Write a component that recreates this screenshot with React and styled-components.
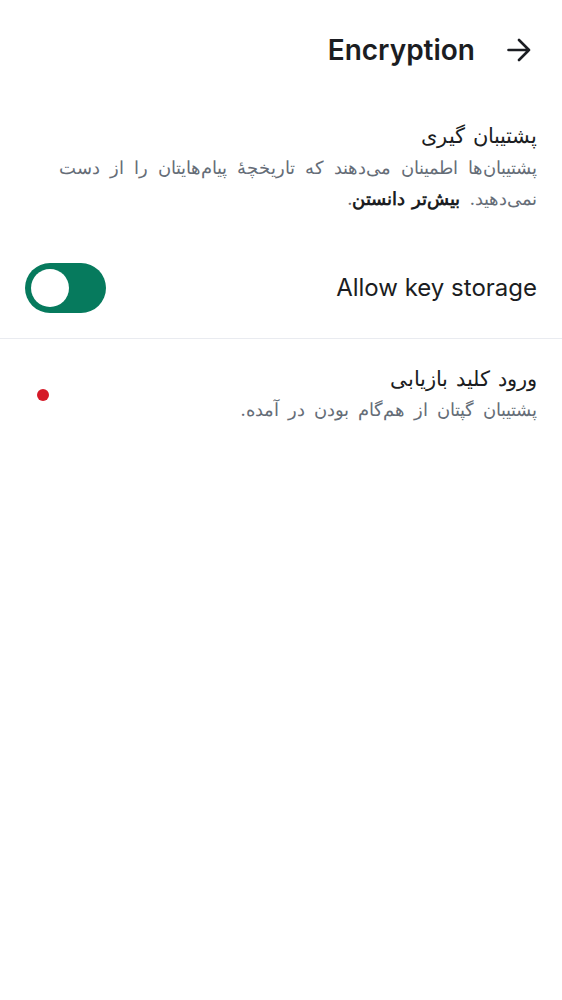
import React from "react";
import styled, { createGlobalStyle } from "styled-components";

const Global = createGlobalStyle`
  html, body { margin: 0; padding: 0; background: #ffffff; }
  body { font-family: Inter, sans-serif; color: #1b1d22; }
`;

const Page = styled.div`
  direction: rtl;
  width: 562px;
  min-height: 1000px;
  background: #fff;
  display: flex;
  flex-direction: column;
`;

const Header = styled.header`
  display: flex;
  align-items: center;
  gap: 32px;
  height: 100px;
  padding: 0 31px 0 25px;
  box-sizing: border-box;
`;

const BackButton = styled.button`
  border: 0;
  background: none;
  padding: 0;
  width: 24px;
  height: 24px;
  display: flex;
  color: #1b1d22;
`;

const Title = styled.h1`
  margin: 0;
  direction: ltr;
  font-size: 28px;
  font-weight: 600;
  color: #1b1d22;
`;

const Section = styled.section`
  display: flex;
  flex-direction: column;
  padding: 20px 25px 0;
`;

const SectionTitle = styled.div`
  font-size: 21px;
  line-height: 32px;
  word-spacing: 2px;
  color: #1b1d22;
`;

const Description = styled.p`
  margin: 0;
  font-size: 18px;
  line-height: 31px;
  word-spacing: 5px;
  color: #656d77;
`;

const LearnMore = styled.b`
  color: #1b1d22;
  font-weight: 700;
  word-spacing: 2px;
`;

const ToggleRow = styled.div`
  display: flex;
  align-items: center;
  justify-content: space-between;
  padding: 0 25px;
  height: 101px;
  margin-top: 23px;
  border-bottom: 1px solid #e9ebf0;
`;

const Label = styled.span`
  direction: ltr;
  font-size: 24px;
  color: #1b1d22;
`;

const Switch = styled.div`
  width: 81px;
  height: 50px;
  border-radius: 25px;
  background: ${(p) => (p.$on ? "#067a5d" : "#c0c6cf")};
  display: flex;
  align-items: center;
  padding: 0 6px;
  box-sizing: border-box;
  justify-content: flex-end;
`;

const Knob = styled.span`
  width: 38px;
  height: 38px;
  border-radius: 50%;
  background: #fff;
`;

const Item = styled.div`
  display: flex;
  align-items: center;
  justify-content: space-between;
  padding: 25px 25px 0;
`;

const ItemText = styled.div`
  display: flex;
  flex-direction: column;
`;

const ItemTitle = styled.div`
  font-size: 21px;
  line-height: 30px;
  word-spacing: 2px;
  color: #1b1d22;
`;

const ItemDesc = styled.div`
  font-size: 18px;
  line-height: 32px;
  word-spacing: 4px;
  color: #656d77;
`;

const Dot = styled.span`
  width: 12px;
  height: 12px;
  border-radius: 50%;
  background: #d51928;
  margin-left: 12px;
`;

export default function App() {
  return (
    <Page>
      <Global />
      <Header>
        <BackButton aria-label="back">
          <svg width="24" height="24" viewBox="0 0 24 24" fill="none" stroke="currentColor" strokeWidth="2.6" strokeLinecap="round" strokeLinejoin="round">
            <path d="M1.5 12h20.5M12 2l10 10-10 10" />
          </svg>
        </BackButton>
        <Title>Encryption</Title>
      </Header>
      <Section>
        <SectionTitle>پشتیبان گیری</SectionTitle>
        <Description>
          پشتیبان‌ها اطمینان می‌دهند که تاریخچهٔ پیام‌هایتان را از دست نمی‌دهید. <LearnMore>بیش‌تر دانستن</LearnMore>.
        </Description>
      </Section>
      <ToggleRow>
        <Label>Allow key storage</Label>
        <Switch $on>
          <Knob />
        </Switch>
      </ToggleRow>
      <Item>
        <ItemText>
          <ItemTitle>ورود کلید بازیابی</ItemTitle>
          <ItemDesc>پشتیبان گپتان از هم‌گام بودن در آمده.</ItemDesc>
        </ItemText>
        <Dot />
      </Item>
    </Page>
  );
}
